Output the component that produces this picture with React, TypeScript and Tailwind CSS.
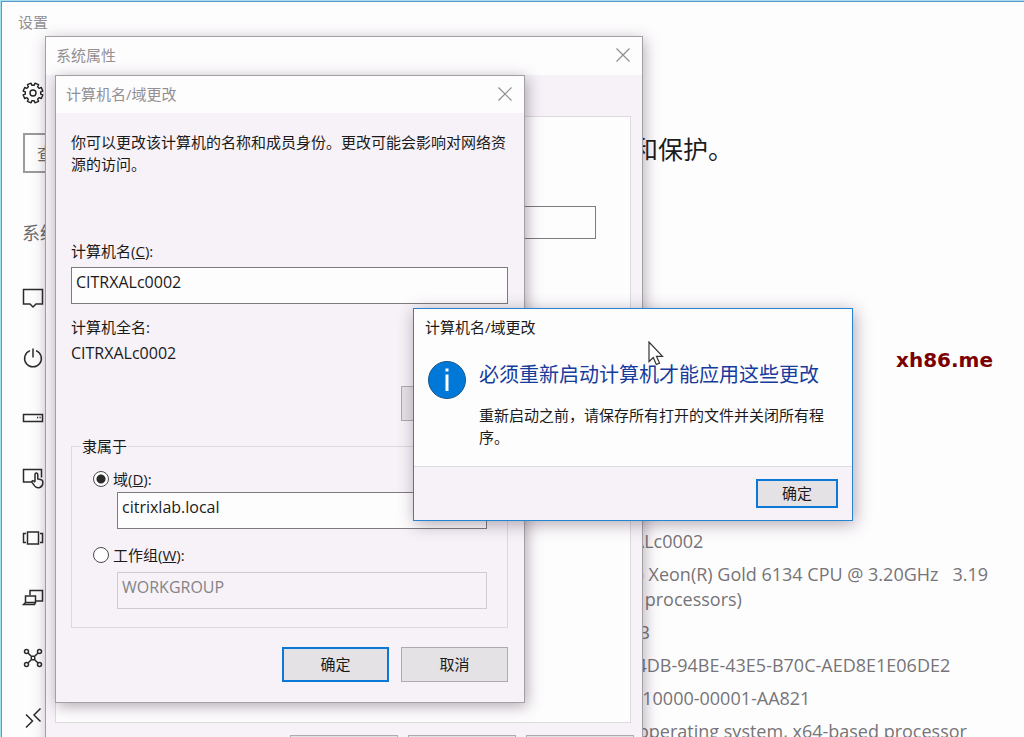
import React, { useState } from 'react';

// Outline of a cog with eight flat teeth, centred on 11,11
const gearPoints = Array.from({ length: 8 }, (_, i) => {
  const base = ((i + 0.5) * Math.PI) / 4;
  return [
    [-0.24, 7.8],
    [-0.2, 10],
    [0.2, 10],
    [0.24, 7.8],
  ]
    .map(([a, r]) => `${11 + r * Math.sin(base + a)},${11 - r * Math.cos(base + a)}`)
    .join(' ');
}).join(' ');

const GearIcon = () => (
  <svg width="22" height="22" viewBox="0 0 22 22" fill="none" stroke="#222" strokeWidth="1.4" strokeLinejoin="round">
    <polygon points={gearPoints} />
    <circle cx="11" cy="11" r="3" />
  </svg>
);

const navItems = [
  {
    name: '显示',
    icon: <path d="M1.5 2.5h19v14.5h-6.5l-3 3-3-3h-6.500z" />,
  },
  {
    name: '电源和睡眠',
    icon: <path d="M11 1.500v9M8 3.600a8.400 8.400 0 1 0 6 0" />,
  },
  {
    name: '存储',
    icon: <path d="M1.500 7.500h19v7h-19zM15 10.500h1.200M17.500 10.500h1.200" />,
  },
  {
    name: '平板模式',
    icon: (
      <path d="M10 15h-8.500v-12.500h18v8M13 14.500v-7a1.400 1.400 0 0 1 2.800 0v4.500l3.500.8q1.500.4 1.500 2v1.500a4.500 4.500 0 0 1-8 2.800l-2.600-3.500q-.7-1.300.4-1.800 1-.3 2.400 1.500" />
    ),
  },
  {
    name: '多任务处理',
    icon: <path d="M5.500 5h11v12h-11zM4 6.500h-2.500v9h2.500M18 6.500h2.500v9h-2.500" />,
  },
  {
    name: '投影到这台电脑',
    icon: <path d="M8 8v-4.500h12.500v10.500h-7M3.500 9h10v6.500h-10zM3.500 15.500l-2 2h11l1-2" />,
  },
  {
    name: '应用和功能',
    icon: (
      <>
        <circle cx="4.500" cy="4.500" r="2" />
        <circle cx="17.500" cy="4.500" r="2" />
        <circle cx="4.500" cy="17.500" r="2" />
        <circle cx="17.500" cy="17.500" r="2" />
        <path d="M6 6l3.500 3.500M16 6l-3.500 3.500M6 16l3.500-3.500M16 16l-3.500-3.500M9.300 9.300h3.400v3.400h-3.400z" />
      </>
    ),
  },
  {
    name: '远程桌面',
    icon: <path d="M4 7.500l6.500 6.500-6.500 6.500M18.500 1.500l-6.500 6.500 6.500 6.500" />,
  },
];

const specs = [
  { label: '设备名称', value: 'CITRXALc0002' },
  { label: '处理器', value: 'Intel(R) Xeon(R) Gold 6134 CPU @ 3.20GHz   3.19 GHz (2 processors)' },
  { label: '机带 RAM', value: '16.0 GB' },
  { label: '设备 ID', value: '8C1F54DB-94BE-43E5-B70C-AED8E1E06DE2' },
  { label: '产品 ID', value: '00377-10000-00001-AA821' },
  { label: '系统类型', value: '64-bit operating system, x64-based processor' },
];

const CloseButton = () => (
  <button type="button" aria-label="关闭" className="flex size-6 items-center justify-center">
    <svg width="14" height="14" viewBox="0 0 14 14" stroke="#8f8f8f" strokeWidth="1.2">
      <path d="M.5.5l13 13M13.500.5l-13 13" />
    </svg>
  </button>
);

const Settings = () => (
  <div className="flex h-full flex-col border-t border-l border-[#a5dff0]">
    <div className="flex grow flex-col border-t border-l border-[#5a98cc] bg-[#fefdfe]">
      <header className="flex h-10 shrink-0 items-center pl-4 text-[15px] text-[#929093]">设置</header>
      <div className="flex">
        <nav className="w-[360px] shrink-0 pl-5 text-[#6b6b6b]">
          <a href="#home" aria-label="主页" className="mt-10 flex h-[22px]">
            <GearIcon />
          </a>
          <input
            type="search"
            aria-label="查找设置"
            placeholder="查找设置"
            className="mt-[29px] ml-px block h-10 w-[300px] border-2 border-[#9c9a9d] pl-3 text-[17px] placeholder:text-[#6b6b6b]"
          />
          <h2 className="mt-12 h-6 text-lg leading-6">系统</h2>
          <ul className="mt-[42px] flex flex-col gap-[38px]">
            {navItems.map((item) => (
              <li key={item.name}>
                <a href="#system" aria-label={item.name} className="flex h-[22px]">
                  <svg width="22" height="22" viewBox="0 0 22 22" fill="none" stroke="#2b2b2b" strokeWidth="1.5">
                    {item.icon}
                  </svg>
                </a>
              </li>
            ))}
          </ul>
        </nav>
        <main className="flex grow flex-col pt-[89px]">
          <h1 className="ml-[21px] text-[25px] leading-9 text-[#1c1c1c]">你的电脑正在受到监控和保护。</h1>
          <dl className="mt-[362px] flex flex-col gap-2 text-lg leading-[25px] text-[#767477]">
            {specs.map((spec) => (
              <div key={spec.label} className="flex">
                <dt className="w-[223px] shrink-0 pl-[21px]">{spec.label}</dt>
                <dd className="max-w-[420px] whitespace-pre-wrap">{spec.value}</dd>
              </div>
            ))}
          </dl>
        </main>
      </div>
    </div>
  </div>
);

const SystemProperties = () => (
  <section className="absolute top-9 left-[45px] flex h-[740px] w-[598px] flex-col border border-[#a3a0a5] bg-[#f6f2f8] shadow-[2px_3px_14px_rgba(60,40,60,0.35)]">
    <header className="flex h-[38px] shrink-0 items-center justify-between bg-[#fefdfe] pr-[7px] pb-0.5 pl-2.5 text-[15px] text-[#929093]">
      系统属性
      <CloseButton />
    </header>
    <div className="mt-[41px] mr-[11px] ml-[9px] flex h-[607px] justify-end border border-[#dcdadd] bg-[#fefdfe] pt-[89px] pr-[34px]">
      <input aria-label="计算机描述" className="h-[33px] w-[340px] border border-[#7d7b7e]" />
    </div>
    <div className="mt-3 mr-2 flex justify-end gap-2.5">
      <button type="button" className="h-[35px] w-[108px] border border-[#adabae] bg-[#e5e2e6]">确定</button>
      <button type="button" className="h-[35px] w-[108px] border border-[#adabae] bg-[#e5e2e6]">取消</button>
      <button type="button" className="h-[35px] w-[108px] border border-[#adabae] bg-[#e5e2e6]">应用(A)</button>
    </div>
  </section>
);

const NameDialog = () => {
  const [member, setMember] = useState('domain');
  const [computerName, setComputerName] = useState('CITRXALc0002');
  const [domain, setDomain] = useState('citrixlab.local');

  const radioClass =
    'size-4 appearance-none rounded-full border border-[#4a4a4a] bg-white checked:bg-[radial-gradient(circle,#2b2b2b_0_4px,#fff_5px)]';

  return (
    <section className="absolute top-[75px] left-[55px] w-[470px] border border-[#a3a0a5] bg-[#f6f2f8] text-[15px] leading-[22px] text-[#1a1a1a] shadow-[2px_3px_14px_rgba(60,40,60,0.4)]">
      <header className="flex h-[37px] items-center justify-between bg-[#fefdfe] pr-[7px] pb-0.5 pl-2.5 text-[#929093]">
        计算机名/域更改
        <CloseButton />
      </header>
      <form className="flex flex-col pt-[18px] pr-4 pb-5 pl-[15px]" onSubmit={(e) => e.preventDefault()}>
        <p>你可以更改该计算机的名称和成员身份。更改可能会影响对网络资源的访问。</p>

        <label htmlFor="computer-name" className="mt-[65px]">
          计算机名(<u>C</u>):
        </label>
        <input
          id="computer-name"
          type="text"
          value={computerName}
          onChange={(e) => setComputerName(e.target.value)}
          className="mt-[5px] h-[37px] border border-[#7d7b7e] bg-[#fefdfe] px-1 pb-2 text-base"
        />

        <div className="mt-3">计算机全名:</div>
        <div className="mt-1 text-base leading-[22px]">CITRXALc0002</div>
        <button type="button" className="mt-[22px] h-[35px] w-[107px] self-end border border-[#adabae] bg-[#e5e2e6]">
          其他(<u>M</u>)...
        </button>

        <fieldset className="mt-[14px] border border-[#dcd9de] pt-[11px] pr-5 pb-[18px] pl-[21px]">
          <legend className="-ml-3 px-px">隶属于</legend>
          <label className="flex items-center gap-1">
            <input
              type="radio"
              name="member"
              checked={member === 'domain'}
              onChange={() => setMember('domain')}
              className={radioClass}
            />
            <span>域(<u>D</u>):</span>
          </label>
          <div className="mt-0.5 flex pl-6">
            <input
              type="text"
              aria-label="域"
              value={domain}
              onChange={(e) => setDomain(e.target.value)}
              className="h-[37px] grow border border-[#7d7b7e] bg-[#fefdfe] px-1 pb-2 text-base"
            />
          </div>
          <label className="mt-[15px] flex items-center gap-1">
            <input
              type="radio"
              name="member"
              checked={member === 'workgroup'}
              onChange={() => setMember('workgroup')}
              className={radioClass}
            />
            <span>工作组(<u>W</u>):</span>
          </label>
          <div className="mt-1.5 flex pl-6">
            <input
              type="text"
              aria-label="工作组"
              defaultValue="WORKGROUP"
              disabled={member !== 'workgroup'}
              className="h-[37px] grow border border-[#7d7b7e] px-1 pb-2 text-base disabled:border-[#cfccd1] disabled:text-[#858386]"
            />
          </div>
        </fieldset>

        <div className="mt-[19px] flex justify-end gap-3">
          <button type="submit" className="h-[35px] w-[107px] border-2 border-[#0a78d4] bg-[#e5e2e6] pb-0.5">确定</button>
          <button type="button" className="h-[35px] w-[107px] border border-[#adabae] bg-[#e5e2e6] pb-0.5">取消</button>
        </div>
      </form>
    </section>
  );
};

const RestartMessage = () => (
  <section className="absolute top-[308px] left-[413px] w-[440px] border border-[#2484d2] bg-[#fefdfe] text-[15px] leading-[22px] text-[#1a1a1a] shadow-[2px_3px_16px_rgba(60,40,60,0.4)]">
    <header className="px-[11px] pt-[7px]">计算机名/域更改</header>
    <div className="flex gap-[13px] pt-[23px] pr-6 pb-[18px] pl-[14px]">
      <svg className="shrink-0" width="38" height="38" viewBox="0 0 38 38">
        <circle cx="19" cy="19" r="18.500" fill="#0078d7" stroke="#16588f" strokeWidth="1" />
        <path d="M19 13.500v16.500" stroke="#fff" strokeWidth="3" />
        <path d="M19 7.500v3" stroke="#fff" strokeWidth="3" />
      </svg>
      <div>
        <h2 className="text-xl leading-7 text-[#153c9c]">必须重新启动计算机才能应用这些更改</h2>
        <p className="mt-[15px]">重新启动之前，请保存所有打开的文件并关闭所有程序。</p>
      </div>
    </div>
    <footer className="flex h-[54px] items-center justify-end border-t border-[#dddbdf] bg-[#f6f2f8] pr-[14px]">
      <button type="button" className="h-[29px] w-[82px] border-2 border-[#0a78d4] bg-[#e5e2e6] pb-0.5">确定</button>
    </footer>
  </section>
);

export default function App() {
  return (
    <div className="relative h-screen overflow-hidden font-['Open_Sans','Noto_Sans_CJK_SC',sans-serif]">
      <Settings />
      <SystemProperties />
      <NameDialog />
      <RestartMessage />

      {/* Mouse pointer */}
      <svg className="absolute top-[341px] left-[648px]" width="17" height="25" viewBox="0 0 17 25">
        <path d="M1 1v19.500l4.300-4 3 7 3.200-1.400-3-6.800h6z" fill="#fff" stroke="#333" strokeWidth="1.200" />
      </svg>

      <div className="absolute top-[348px] left-[896px] font-['DejaVu_Sans',sans-serif] text-xl leading-6 font-bold text-[#7a0000]">
        xh86.me
      </div>
    </div>
  );
}
